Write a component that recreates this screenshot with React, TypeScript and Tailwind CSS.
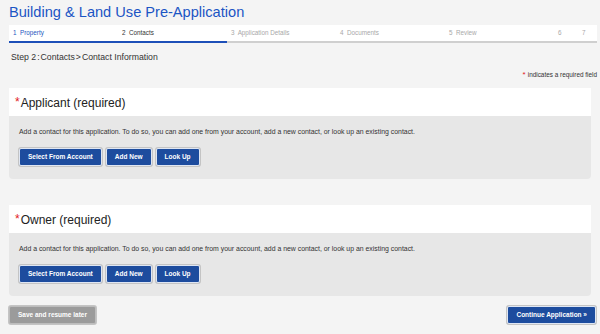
const steps = [
  { label: '1  Property', w: 'w-[109px]', tone: 'text-[#2457c0]', done: true },
  { label: '2  Contacts', w: 'w-[109px]', tone: 'text-[#333333]', done: true },
  { label: '3  Application Details', w: 'w-[109px]', tone: 'text-[#a8a8a8]', done: false },
  { label: '4  Documents', w: 'w-[109px]', tone: 'text-[#a8a8a8]', done: false },
  { label: '5  Review', w: 'w-[109px]', tone: 'text-[#a8a8a8]', done: false },
  { label: '6', w: 'w-[24px]', tone: 'text-[#a8a8a8]', done: false },
  { label: '7', w: 'flex-1', tone: 'text-[#a8a8a8]', done: false },
]

const ActionButton = ({ text, gray }: { text: string; gray?: boolean }) => (
  <button
    className={`h-[18px] px-[8px] rounded-[2px] border text-[6.5px] font-bold text-white leading-none whitespace-pre shadow-[0_0_0_1px_#c4c4c4] ${
      gray ? 'bg-[#9b9b9b] border-[#bdbdbd]' : 'bg-[#1d4c9e] border-[#dfe6f3]'
    }`}
  >
    {text}
  </button>
)

const ContactPanel = ({ title }: { title: string }) => (
  <section className="mx-[9px]">
    <div className="h-[28px] bg-white flex items-center pl-[6px]">
      <span className="text-[#e21c1c] text-[12px] leading-none self-start mt-[8px] mr-[1px]">*</span>
      <h2 className="text-[12px] leading-none text-[#222222] mt-[2px]">{title}</h2>
    </div>
    <div className="bg-[#e7e7e7] rounded-b-[4px] pl-[10px] pt-[11px] pb-[13px] h-[63px]">
      <p className="text-[6.9px] leading-[9px] text-[#333333]">
        Add a contact for this application. To do so, you can add one from your account, add a new contact, or look
        up an existing contact.
      </p>
      <div className="flex gap-[4px] mt-[12px]">
        <ActionButton text="Select From Account" />
        <ActionButton text="Add New" />
        <ActionButton text="Look Up" />
      </div>
    </div>
  </section>
)

export default function App() {
  return (
    <div className="w-[600px] h-[334px] overflow-hidden bg-[#f4f4f4] font-['Liberation_Sans',Arial,sans-serif]">
      <h1 className="h-[25px] pl-[9px] pt-[3px] text-[14.6px] leading-[18px] text-[#1b55c4]">
        Building &amp; Land Use Pre-Application
      </h1>

      <nav className="mr-[3px] ml-[9px] flex h-[18px] bg-white">
        {steps.map(({ label, w, tone, done }) => (
          <div
            key={label}
            className={`${w} h-full flex items-center pl-[4px] border-b-2 ${
              done ? 'border-[#1d4fb8]' : 'border-[#cfcfcf]'
            }`}
          >
            <span className={`text-[6.3px] leading-none whitespace-pre ${tone}`}>{label}</span>
          </div>
        ))}
      </nav>

      <div className="mt-[5px] h-[20px] flex items-center pl-[11px] text-[8.7px] text-[#333333]">
        Step 2<span className="mx-[1px]">:</span>Contacts<span className="mx-[1px]">&gt;</span>Contact Information
      </div>

      <div className="h-[14px] flex items-center justify-end pr-[3px] text-[6.4px] text-[#333333]">
        <span className="text-[#e21c1c] mr-[2px] self-start mt-[3px] text-[8px] leading-none">*</span>
        indicates a required field
      </div>

      <div className="mt-[6px] flex flex-col gap-[26px]">
        <ContactPanel title="Applicant (required)" />
        <ContactPanel title="Owner (required)" />
      </div>

      <div className="mt-[10px] mx-[9px] mr-[4px] flex justify-between">
        <ActionButton text="Save and resume later" gray />
        <ActionButton text="Continue Application »" />
      </div>
    </div>
  )
}
